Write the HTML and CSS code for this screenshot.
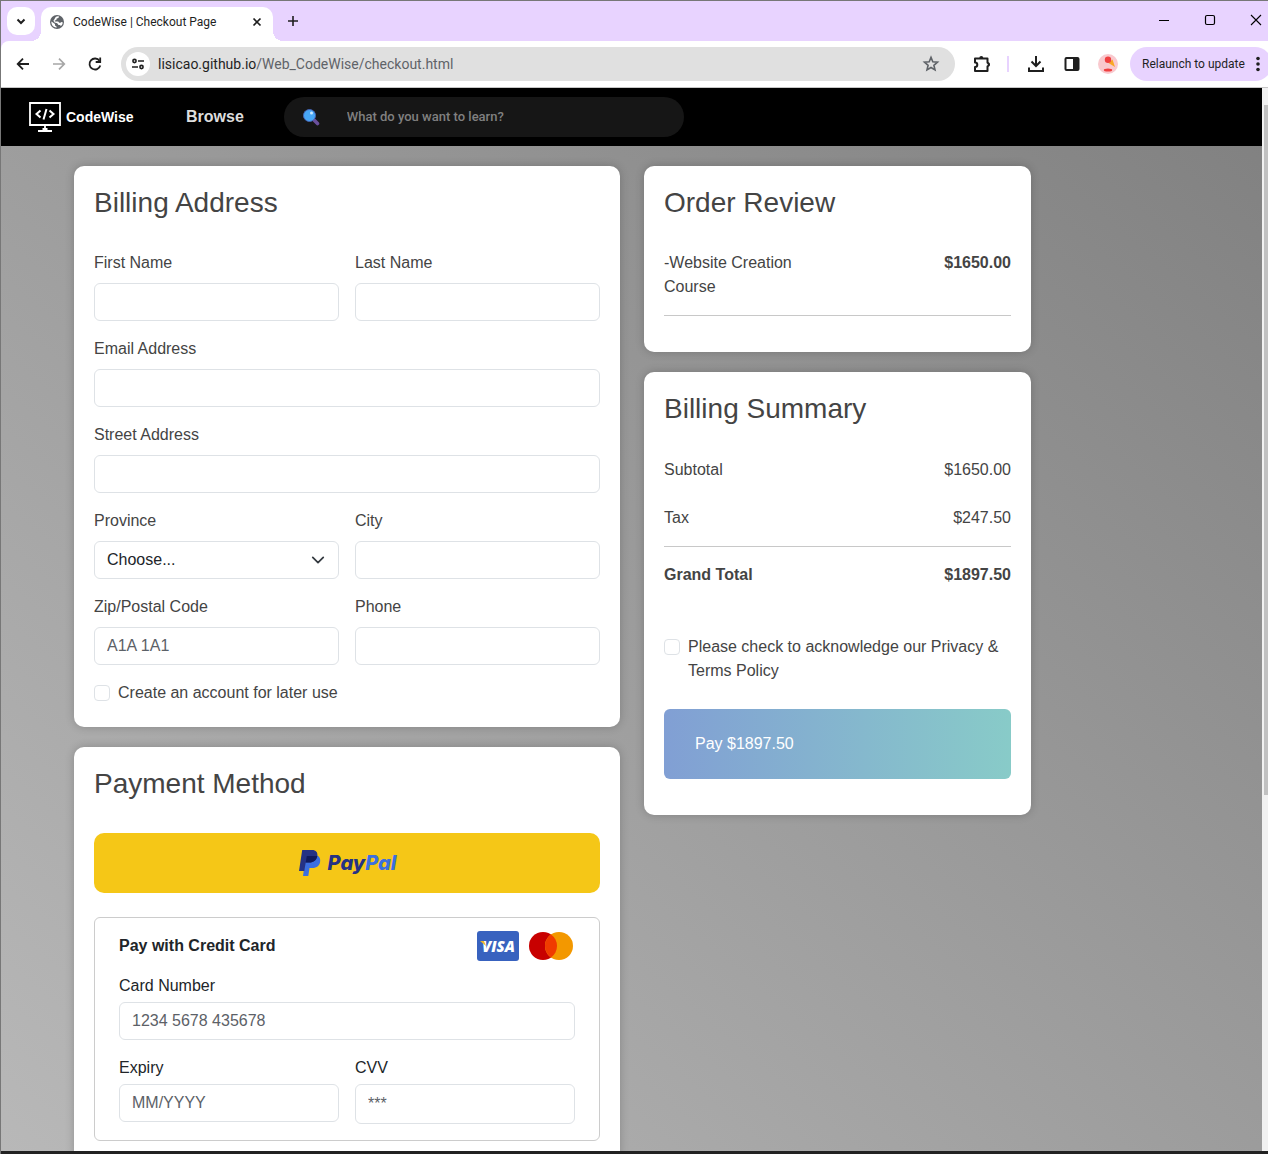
FILE: index.html
```html
<!DOCTYPE html>
<html lang="en">
<head>
<meta charset="utf-8">
<meta name="viewport" content="width=device-width, initial-scale=1">
<title>CodeWise | Checkout Page</title>
<link rel="stylesheet" href="styles.css">
</head>
<body>
<div class="window">
  <header class="chrome">
    <div class="tabstrip">
      <button class="tab-search" aria-label="Search tabs"><svg width="12" height="12" viewBox="0 0 12 12" fill="none" stroke="#1f1f1f" stroke-width="2"><path d="M2.500 4.500 6 8l3.500-3.500"/></svg></button>
      <div class="tab">
        <svg width="16" height="16" viewBox="0 0 16 16"><circle cx="8" cy="8" r="7" fill="#5f6368"/><path d="M2.500 7.500 6 10v1.500l1.500 1v1.200A6 6 0 0 1 2.300 8zM6.500 3.200c1-.9 2-1 3.500-.8l-.6 1.600-1.700.5-.4 1.500-1.500.4v1h3.400l1 1.400h1.300l.8-.7 1.600.3a6 6 0 0 1-1.900 3.500L10.800 11H9.500L8.200 9.200 5.600 8.500 4.400 6.700l1-1.500z" fill="#fff"/></svg>
        <span class="tab-title">CodeWise | Checkout Page</span>
        <button class="tab-close" aria-label="Close tab"><svg width="10" height="10" viewBox="0 0 10 10" stroke="#1f1f1f" stroke-width="1.700"><path d="m1.500 1.500 7 7m0-7-7 7"/></svg></button>
      </div>
      <button class="new-tab" aria-label="New tab"><svg width="12" height="12" viewBox="0 0 12 12" stroke="#1f1f1f" stroke-width="1.600"><path d="M6 1v10M1 6h10"/></svg></button>
      <div class="window-controls">
        <button aria-label="Minimize"><svg width="12" height="12" viewBox="0 0 12 12" stroke="#000"><path d="M1 6.500h10"/></svg></button>
        <button aria-label="Maximize"><svg width="12" height="12" viewBox="0 0 12 12" fill="none" stroke="#000" stroke-width="1.200"><rect x="1.500" y="1.500" width="9" height="9" rx="1.500"/></svg></button>
        <button aria-label="Close"><svg width="12" height="12" viewBox="0 0 12 12" stroke="#000" stroke-width="1.100"><path d="m1 1 10 10M11 1 1 11"/></svg></button>
      </div>
    </div>
    <div class="toolbar">
      <button class="tool" aria-label="Back"><svg width="16" height="16" viewBox="0 0 16 16" fill="none" stroke="#1f1f1f" stroke-width="1.800"><path d="M14 8H3M8 2.700 2.700 8 8 13.300"/></svg></button>
      <button class="tool" aria-label="Forward"><svg width="16" height="16" viewBox="0 0 16 16" fill="none" stroke="#a6a6a6" stroke-width="1.700"><path d="M2 8h11M8 2.700 13.300 8 8 13.300"/></svg></button>
      <button class="tool" aria-label="Reload"><svg width="16" height="16" viewBox="0 0 16 16" fill="none" stroke="#1f1f1f" stroke-width="1.800"><path d="M13.300 9.500A5.500 5.500 0 1 1 12.500 4.800"/><path d="M13.200 1.500V6H8.700"/></svg></button>
      <div class="address">
        <button class="site-info" aria-label="Site information"><svg width="14" height="14" viewBox="0 0 14 14" fill="none" stroke="#1f1f1f" stroke-width="1.600"><circle cx="3.500" cy="4" r="1.600"/><path d="M7 4h6M1 10h6"/><circle cx="10.500" cy="10" r="1.600"/></svg></button>
        <a class="url" href="#">lisicao.github.io<span>/Web_CodeWise/checkout.html</span></a>
        <button class="bookmark" aria-label="Bookmark"><svg width="18" height="18" viewBox="0 0 18 18" fill="none" stroke="#5f6368" stroke-width="1.600"><path d="m9 2.400 1.800 4.400 4.700.4-3.600 3.100 1.100 4.600L9 12.500l-4 2.400 1.100-4.600-3.600-3.100 4.700-.4z"/></svg></button>
      </div>
      <button class="tool" aria-label="Extensions"><svg width="20" height="20" viewBox="0 0 20 20"><path d="M3 4.500h12.500v4.300a1.900 1.900 0 0 1 0 3.600v4.600H3v-4a2.300 2.300 0 0 0 0-4.600z" fill="none" stroke="#1f1f1f" stroke-width="2" stroke-linejoin="round"/><path d="M7.300 4a2 2 0 0 1 4 0zM16 8.500a2 2 0 0 1 0 4z" fill="#1f1f1f"/></svg></button>
      <span class="separator"></span>
      <button class="tool" aria-label="Downloads"><svg width="18" height="18" viewBox="0 0 18 18" fill="none" stroke="#1f1f1f" stroke-width="2"><path d="M9 1v9.500M4.500 6.500 9 11l4.500-4.500M2 12.500V16h14v-3.500"/></svg></button>
      <button class="tool" aria-label="Side panel"><svg width="16" height="16" viewBox="0 0 16 16"><rect x="1.500" y="2" width="13" height="12" rx="1" fill="none" stroke="#1f1f1f" stroke-width="2"/><path d="M9 2h5.500v12H9z" fill="#1f1f1f"/></svg></button>
      <button class="tool" aria-label="Profile"><svg width="20" height="20" viewBox="0 0 20 20"><circle cx="10" cy="10" r="10" fill="#f9c9ce"/><path d="m10.500 9 4-3.500 2.500 7.500z" fill="#f9a825"/><circle cx="10" cy="5.800" r="3.200" fill="#f04040"/><ellipse cx="10" cy="16" rx="4.200" ry="1.500" fill="#f04040"/></svg></button>
      <button class="relaunch">Relaunch to update<svg width="4" height="16" viewBox="0 0 4 16" fill="#1f1f1f"><circle cx="2" cy="2.500" r="1.800"/><circle cx="2" cy="8" r="1.800"/><circle cx="2" cy="13.500" r="1.800"/></svg></button>
    </div>
  </header>

  <div class="viewport">
    <div class="page">
      <nav class="navbar">
        <a class="logo" href="#">
          <svg width="34" height="32" viewBox="0 0 34 32" fill="none" stroke="#fff" stroke-width="2"><path d="M2 2h30v22H2zM14.500 28h5M10 30h14M17 24v6" stroke-width="1.800"/><path d="m12.500 9.500-4 3.500 4 3.500M21.500 9.500l4 3.500-4 3.500M18.500 8l-3 10.500"/></svg>
          <span>CodeWise</span>
        </a>
        <a class="browse" href="#">Browse</a>
        <label class="search">
          <svg width="18" height="18" viewBox="0 0 18 18"><path d="m11 11 4.500 4.500" stroke="#6a4f9c" stroke-width="3.600" stroke-linecap="round"/><circle cx="7.500" cy="7.500" r="6" fill="#47a6f5" stroke="#4665b5"/><circle cx="9.500" cy="5" r="1.500" fill="#c9e8ff"/></svg>
          <input type="text" placeholder="What do you want to learn?" aria-label="Search">
        </label>
      </nav>

      <main class="checkout">
        <div class="column">
          <section class="card">
            <h3 class="card-title">Billing Address</h3>
            <form class="fields">
              <div class="field"><label for="first">First Name</label><input class="control" id="first" type="text"></div>
              <div class="field"><label for="last">Last Name</label><input class="control" id="last" type="text"></div>
              <div class="field wide"><label for="email">Email Address</label><input class="control" id="email" type="email"></div>
              <div class="field wide"><label for="street">Street Address</label><input class="control" id="street" type="text"></div>
              <div class="field"><label for="province">Province</label>
                <div class="select">
                  <select class="control" id="province"><option>Choose...</option></select>
                  <svg width="16" height="16" viewBox="0 0 16 16" fill="none" stroke="#343a40" stroke-width="2" stroke-linecap="round" stroke-linejoin="round"><path d="m2 5 6 6 6-6"/></svg>
                </div>
              </div>
              <div class="field"><label for="city">City</label><input class="control" id="city" type="text"></div>
              <div class="field"><label for="zip">Zip/Postal Code</label><input class="control" id="zip" type="text" placeholder="A1A 1A1"></div>
              <div class="field"><label for="phone">Phone</label><input class="control" id="phone" type="tel"></div>
              <div class="check wide"><input type="checkbox" id="account"><label for="account">Create an account for later use</label></div>
            </form>
          </section>

          <section class="card payment">
            <h3 class="card-title">Payment Method</h3>
            <button class="paypal" aria-label="PayPal">
              <svg width="24" height="28" viewBox="0 0 24 28"><path d="M8 6h10c3.500 1 4.800 4 4 7.500-1 4-4 5.500-8 5.500h-2.500l-1.200 8H5z" fill="#3b6fe0"/><path d="M4.200 1H14c4 0 6 2.600 5.300 6-.8 4.200-3.800 6.500-8 6.500H7.700L6.300 22H1z" fill="#253284"/><path d="M8.800 7h10.500c-.8 4.300-3.700 6.500-8 6.500H7.700z" fill="#101a5c"/></svg>
              <span class="paypal-name">Pay<span>Pal</span></span>
            </button>
            <div class="credit">
              <div class="credit-head">
                <strong>Pay with Credit Card</strong>
                <svg width="98" height="30" viewBox="0 0 98 30" role="img" aria-label="Visa and Mastercard"><rect width="42" height="30" rx="3" fill="#3862bf"/><text class="visa" x="5" y="21">VISA</text><path d="M3 10h4l2 5z" fill="#eab52d"/><circle cx="66" cy="15" r="14" fill="#c80000"/><circle cx="82" cy="15" r="14" fill="#f39800"/><path d="M74 3.500a14 14 0 0 1 0 23 14 14 0 0 1 0-23z" fill="#f03a00"/></svg>
              </div>
              <div class="credit-fields">
                <div class="field wide"><label for="card">Card Number</label><input class="control" id="card" type="text" placeholder="1234 5678 435678"></div>
                <div class="field"><label for="expiry">Expiry</label><input class="control" id="expiry" type="text" placeholder="MM/YYYY"></div>
                <div class="field"><label for="cvv">CVV</label><input class="control tall" id="cvv" type="password" placeholder="***"></div>
              </div>
            </div>
          </section>
        </div>

        <div class="column">
          <section class="card">
            <h3 class="card-title">Order Review</h3>
            <div class="line"><span class="item">-Website Creation Course</span><b>$1650.00</b></div>
            <hr>
          </section>
          <section class="card summary">
            <h3 class="card-title">Billing Summary</h3>
            <div class="line spaced"><span>Subtotal</span><span>$1650.00</span></div>
            <div class="line"><span>Tax</span><span>$247.50</span></div>
            <hr>
            <div class="line"><b>Grand Total</b><b>$1897.50</b></div>
            <div class="check terms"><input type="checkbox" id="terms"><label for="terms">Please check to acknowledge our Privacy &amp; Terms Policy</label></div>
            <button class="pay">Pay $1897.50</button>
          </section>
        </div>
      </main>
    </div>
    <div class="scrollbar"><span class="thumb"></span></div>
  </div>
</div>
</body>
</html>
```

FILE: styles.css
```css
* { box-sizing: border-box; }
body { margin: 0; font: 16px/24px "Liberation Sans", Arial, sans-serif; color: #212529; }
button, input, select { font: inherit; color: inherit; margin: 0; }
button { border: 0; padding: 0; background: none; }
a { color: inherit; text-decoration: none; }
svg { display: block; flex: none; }

.window {
  height: 100vh;
  display: flex;
  flex-direction: column;
  overflow: hidden;
  border: solid #777;
  border-width: 1px 0 0 1px;
}

/* Browser frame */
.chrome { background: #e8d3ff; font-family: Roboto, "Noto Sans", sans-serif; color: #1f1f1f; }
.tabstrip { display: flex; height: 40px; padding: 6px 0 0 6px; }
.tab-search { width: 28px; height: 28px; border-radius: 10px; background: #fff; display: grid; place-items: center; }
.tab {
  position: relative;
  width: 232px;
  margin-left: 6px;
  padding: 0 11px 4px 8px;
  display: flex;
  align-items: center;
  gap: 8px;
  background: #fff;
  border-radius: 10px 10px 0 0;
  font-size: 12px;
}
.tab::before, .tab::after { content: ""; position: absolute; bottom: 0; width: 10px; height: 10px; }
.tab::before { right: 100%; background: radial-gradient(circle at 0 0, transparent 10px, #fff 10px); }
.tab::after { left: 100%; background: radial-gradient(circle at 100% 0, transparent 10px, #fff 10px); }
.tab-title { flex: 1; white-space: nowrap; }
.new-tab { width: 28px; height: 28px; margin-left: 6px; display: grid; place-items: center; }
.window-controls { display: flex; margin-left: auto; margin-right: -11px; height: 26px; }
.window-controls button { width: 46px; display: grid; place-items: center; }
.toolbar {
  display: flex;
  align-items: center;
  height: 47px;
  padding-left: 4px;
  background: #fff;
  border-radius: 8px 0 0 0;
  border-bottom: 1px solid #c6c6c6;
}
.tool { width: 36px; height: 34px; flex: none; display: grid; place-items: center; }
.address {
  flex: 1;
  min-width: 0;
  height: 34px;
  margin: 0 9px 0 8px;
  padding: 0 15px 0 5px;
  display: flex;
  align-items: center;
  gap: 8px;
  border-radius: 17px;
  background: #e0e0e0;
  font-size: 14px;
}
.site-info { width: 24px; height: 24px; flex: none; border-radius: 50%; background: #fff; display: grid; place-items: center; }
.url { flex: 1; white-space: nowrap; overflow: hidden; }
.url span { color: #5f6368; }
.separator { width: 2px; height: 16px; margin: 0 9px 0 7px; background: #e8d3ff; }
.relaunch {
  width: 142px;
  height: 34px;
  flex: none;
  margin: 0 -4px 0 4px;
  padding: 0 12px;
  display: flex;
  align-items: center;
  justify-content: space-between;
  border-radius: 17px;
  background: #e8d3ff;
  font-size: 12px;
  white-space: nowrap;
}

/* Page */
.viewport { flex: 1; min-height: 0; display: flex; border-bottom: 3px solid #222; }
.page { flex: 1; overflow: hidden; background: linear-gradient(to bottom left, #808080, #b8b8b8); }
.scrollbar { width: 6px; padding: 17px 0 0 2px; background: #f1f1f1; }
.thumb { display: block; height: 66%; background: #c1c1c1; }

.navbar { display: flex; align-items: center; height: 58px; padding-left: 27px; background: #000; }
.logo { display: flex; align-items: center; gap: 4px; color: #fff; font: bold 14px/24px "Liberation Sans Narrow", "Liberation Sans", sans-serif; }
.logo span { width: 64px; }
.browse { margin-left: 56px; color: #ddd; font-weight: bold; }
.search {
  display: flex;
  align-items: center;
  gap: 27px;
  width: 400px;
  height: 40px;
  margin-left: 40px;
  padding: 0 18px;
  border-radius: 20px;
  background: #161616;
}
.search input { flex: 1; border: 0; padding: 0; background: none; font-family: Roboto, sans-serif; font-size: 13px; font-weight: 500; color: #fff; }
.search input::placeholder { color: #808080; opacity: 1; }

.checkout {
  display: grid;
  grid-template-columns: minmax(0, 546px) minmax(0, 387px);
  align-items: start;
  gap: 24px;
  max-width: 1115px;
  margin: 20px auto;
}
.column { display: grid; gap: 20px; }
.card { padding: 20px; border-radius: 10px; background: #fff; box-shadow: 0 0 10px rgba(0, 0, 0, .2); color: #444; }
.card-title { margin: 0 0 31px; font-size: 28px; line-height: 34px; font-weight: normal; }
.fields, .credit-fields { display: grid; grid-template-columns: 1fr 1fr; gap: 16px; }
.fields { padding-bottom: 2px; }
.wide { grid-column: 1 / -1; }
.field { display: flex; flex-direction: column; gap: 8px; }
.control {
  width: 100%;
  height: 38px;
  padding: 0 12px;
  border: 1px solid #dee2e6;
  border-radius: 6px;
  background: #fff;
  color: #212529;
}
.control::placeholder { color: #5c6167; opacity: 1; }
.select { display: grid; align-items: center; }
.select > * { grid-area: 1 / 1; }
.select select { appearance: none; }
.select svg { justify-self: end; width: 14px; margin-right: 14px; pointer-events: none; }
.check { display: flex; gap: 8px; }
.check input {
  appearance: none;
  flex: none;
  width: 16px;
  height: 16px;
  margin-top: 4px;
  border: 1px solid #dee2e6;
  border-radius: 4px;
  background: #fff;
}

.payment .card-title, .summary .card-title { margin-bottom: 32px; }
.paypal {
  display: flex;
  align-items: center;
  justify-content: center;
  gap: 6px;
  width: 100%;
  height: 60px;
  border-radius: 10px;
  background: #f5c717;
}
.paypal-name { font: italic 800 20px/28px Inter, sans-serif; color: #253284; }
.paypal-name span { color: #3b6fe0; }
.credit { margin-top: 24px; padding: 13px 24px 16px; border: 1px solid #ccc; border-radius: 6px; color: #212529; }
.credit-head { display: flex; align-items: center; justify-content: space-between; margin-bottom: 13px; }
.visa { font: italic 800 15px "Open Sans", sans-serif; fill: #fff; }
.credit-fields { row-gap: 16px; }
.credit-fields .field { gap: 4px; }
.control.tall { height: 40px; }

.line { display: flex; justify-content: space-between; }
.line.spaced { margin-bottom: 24px; }
.item { width: 50%; }
hr { margin: 16px 0; border: 0; border-top: 1px solid #c8c8c8; }
.terms { margin-top: 48px; }
.pay {
  width: 100%;
  height: 70px;
  margin: 26px 0 16px;
  padding: 0 31px;
  border-radius: 6px;
  background: linear-gradient(to right, #819fd4, #88cbc8);
  color: #fff;
  text-align: left;
}
```
